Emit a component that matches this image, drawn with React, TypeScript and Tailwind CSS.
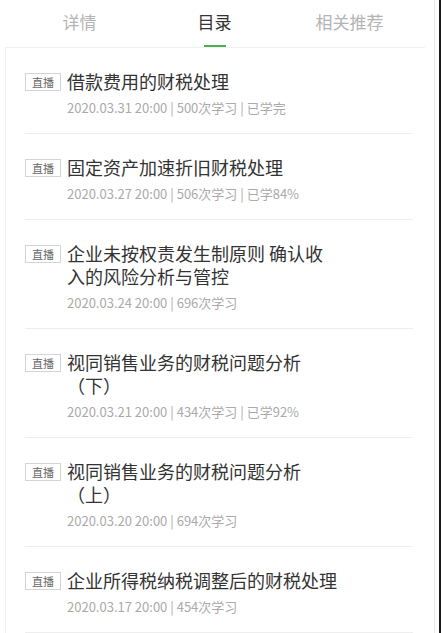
import React from 'react';

type Lesson = {
  title: string;
  date: string;
  views: number;
  progress?: string;
};

const lessons: Lesson[] = [
  { title: '借款费用的财税处理', date: '2020.03.31 20:00', views: 500, progress: '已学完' },
  { title: '固定资产加速折旧财税处理', date: '2020.03.27 20:00', views: 506, progress: '已学84%' },
  { title: '企业未按权责发生制原则 确认收入的风险分析与管控', date: '2020.03.24 20:00', views: 696 },
  { title: '视同销售业务的财税问题分析（下）', date: '2020.03.21 20:00', views: 434, progress: '已学92%' },
  { title: '视同销售业务的财税问题分析（上）', date: '2020.03.20 20:00', views: 694 },
  { title: '企业所得税纳税调整后的财税处理', date: '2020.03.17 20:00', views: 454 },
];

const tabs = ['详情', '目录', '相关推荐'];

const App: React.FC = () => {
  const active = 1;

  return (
    <div
      className="flex h-[633px] w-[442px] overflow-hidden bg-white"
      style={{ fontFamily: '"Noto Sans CJK SC", "Noto Sans", sans-serif' }}
    >
      <div className="w-[435px] border-r border-[#e6e6e6]">
        {/* Tabs */}
        <div className="flex h-[47px] pl-[12px]">
          {tabs.map((tab, i) => (
            <div key={tab} className="relative flex w-[135px] items-center justify-center pb-[3px]">
              <span
                className={
                  i === active
                    ? 'text-[17px] text-[#333333]'
                    : 'text-[17px] text-[#b4b4b4]'
                }
              >
                {tab}
              </span>
              {i === active && (
                <div className="absolute bottom-0 left-1/2 h-[2px] w-[22px] -translate-x-1/2 bg-[#4cb050]" />
              )}
            </div>
          ))}
        </div>

        {/* Lesson list */}
        <div className="ml-[5px] mr-[9px] border-l border-t border-[#efefef]">
          {lessons.map((item) => (
            <div key={item.date} className="ml-[19px] mr-[12px] flex border-b border-[#eeeeee] pb-[16px] pt-[22px]">
              <div className="mt-[3px] flex h-[18px] w-[36px] shrink-0 items-center justify-center border border-[#d4d4d4] text-[11px] leading-none text-[#666666]">
                直播
              </div>
              <div className="ml-[6px] flex flex-col">
                <div className="max-w-[272px] text-[18px] leading-[23px] text-[#333333]">{item.title}</div>
                <div className="mt-[6px] text-[13px] leading-[18px] text-[#aaaaaa]">
                  {item.date} | {item.views}次学习{item.progress ? ` | ${item.progress}` : ''}
                </div>
              </div>
            </div>
          ))}
        </div>
      </div>
      <div className="w-[4px]" />
      <div className="w-[2px] bg-[#1a1a1a]" />
    </div>
  );
};

export default App;
